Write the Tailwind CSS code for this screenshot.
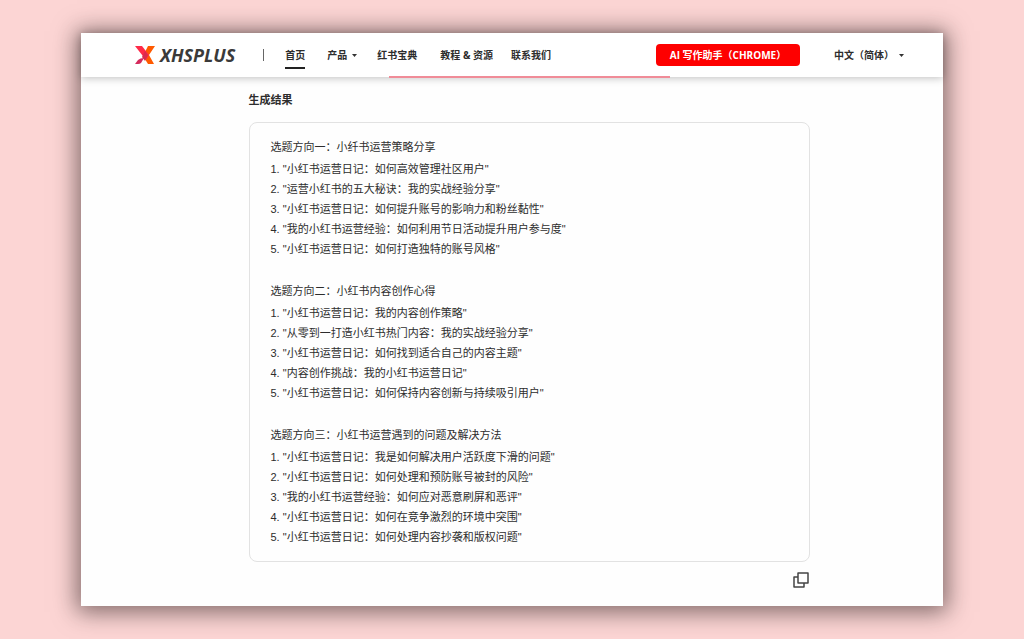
<!DOCTYPE html>
<html lang="zh-CN">
<head>
<meta charset="utf-8">
<meta name="viewport" content="width=device-width, initial-scale=1">
<title>XHSPLUS</title>
<script src="https://cdn.jsdelivr.net/npm/@tailwindcss/browser@4"></script>
</head>
<body class="min-h-screen bg-[#fcd5d4] px-[81px] pt-[33px] pb-[33px] font-['Liberation_Sans','Noto_Sans_CJK_SC',sans-serif] text-[#2d2d2d]">
<div class="bg-[#fefefe] pb-[18px] shadow-[0_2px_22px_4px_rgba(30,20,20,0.56)]">
  <header class="flex h-11 items-center bg-white pr-[39px] pl-[54px] font-['Open_Sans','Noto_Sans_CJK_SC',sans-serif] text-[10px] font-bold whitespace-nowrap shadow-[0_1px_8px_rgba(0,0,0,0.25)]">
    <a href="#" class="flex items-center gap-[5px] text-[#3a3a3a]">
      <svg class="h-5 w-5" viewBox="0 0 20 20" aria-hidden="true">
        <path d="M13 1h7l-6 9 5 9h-6L8 11z" fill="#ff5a00"/>
        <path d="M0 1h7l7 9-3 5z" fill="#ff2a48"/>
        <path d="M10 6l3 4-3 6-3-4z" fill="#d92b4d"/>
        <path d="M0 19l3-4q2-2 6-2l-3 5q-1 1-3 1z" fill="#d42a5c"/>
      </svg>
      <span class="text-[18px] leading-5 italic">XHSPLUS</span>
    </a>
    <span class="ml-7 h-3 w-px bg-[#666]"></span>
    <nav class="ml-[21px] flex items-center">
      <a href="#" class="flex h-7 items-center border-y-2 border-t-transparent border-b-[#222]">首页</a>
      <button type="button" class="ml-[22px] flex items-center gap-[5px]">产品
        <svg class="h-[3px] w-[5px]" viewBox="0 0 5 3" aria-hidden="true"><path d="M0 0h5L2.500 3z" fill="#333"/></svg>
      </button>
      <a href="#" class="ml-5">红书宝典</a>
      <a href="#" class="ml-[23px]">教程 &amp; 资源</a>
      <a href="#" class="ml-[18px]">联系我们</a>
    </nav>
    <a href="#" class="ml-auto flex h-[22px] w-36 items-center justify-center rounded bg-[#fe0000] text-white">AI 写作助手（CHROME）</a>
    <button type="button" class="ml-[34px] flex items-center gap-[5px]">中文（简体）
      <svg class="h-[3px] w-[5px]" viewBox="0 0 5 3" aria-hidden="true"><path d="M0 0h5L2.500 3z" fill="#333"/></svg>
    </button>
  </header>
  <main class="pl-[34px]">
    <div class="mx-auto -mt-px h-[2px] w-[281px] bg-[#f08c98]"></div>
    <section class="mx-auto w-[561px]">
      <h1 class="pt-3 text-[11px] leading-5 font-bold">生成结果</h1>
      <div class="mt-3 flex flex-col gap-[22px] rounded-lg border border-[#e2e2e2] px-[21px] py-3.5 text-[11px] leading-5">
        <div class="flex flex-col gap-0.5">
          <h2>选题方向一：小纤书运营策略分享</h2>
          <ul>
            <li>1. "小红书运营日记：如何高效管理社区用户"</li>
            <li>2. "运营小红书的五大秘诀：我的实战经验分享"</li>
            <li>3. "小红书运营日记：如何提升账号的影响力和粉丝黏性"</li>
            <li>4. "我的小红书运营经验：如何利用节日活动提升用户参与度"</li>
            <li>5. "小红书运营日记：如何打造独特的账号风格"</li>
          </ul>
        </div>
        <div class="flex flex-col gap-0.5">
          <h2>选题方向二：小红书内容创作心得</h2>
          <ul>
            <li>1. "小红书运营日记：我的内容创作策略"</li>
            <li>2. "从零到一打造小红书热门内容：我的实战经验分享"</li>
            <li>3. "小红书运营日记：如何找到适合自己的内容主题"</li>
            <li>4. "内容创作挑战：我的小红书运营日记"</li>
            <li>5. "小红书运营日记：如何保持内容创新与持续吸引用户"</li>
          </ul>
        </div>
        <div class="flex flex-col gap-0.5">
          <h2>选题方向三：小红书运营遇到的问题及解决方法</h2>
          <ul>
            <li>1. "小红书运营日记：我是如何解决用户活跃度下滑的问题"</li>
            <li>2. "小红书运营日记：如何处理和预防账号被封的风险"</li>
            <li>3. "我的小红书运营经验：如何应对恶意刷屏和恶评"</li>
            <li>4. "小红书运营日记：如何在竞争激烈的环境中突围"</li>
            <li>5. "小红书运营日记：如何处理内容抄袭和版权问题"</li>
          </ul>
        </div>
      </div>
      <div class="mt-2.5 flex justify-end">
        <button type="button" aria-label="复制">
          <svg class="h-4 w-[18px]" viewBox="0 0 18 16" fill="none" stroke="#444" stroke-width="1.500" stroke-linejoin="round" aria-hidden="true">
            <rect x="6" y="1" width="10" height="10"/>
            <path d="M6 5H2v10h10v-4"/>
          </svg>
        </button>
      </div>
    </section>
  </main>
</div>
</body>
</html>
